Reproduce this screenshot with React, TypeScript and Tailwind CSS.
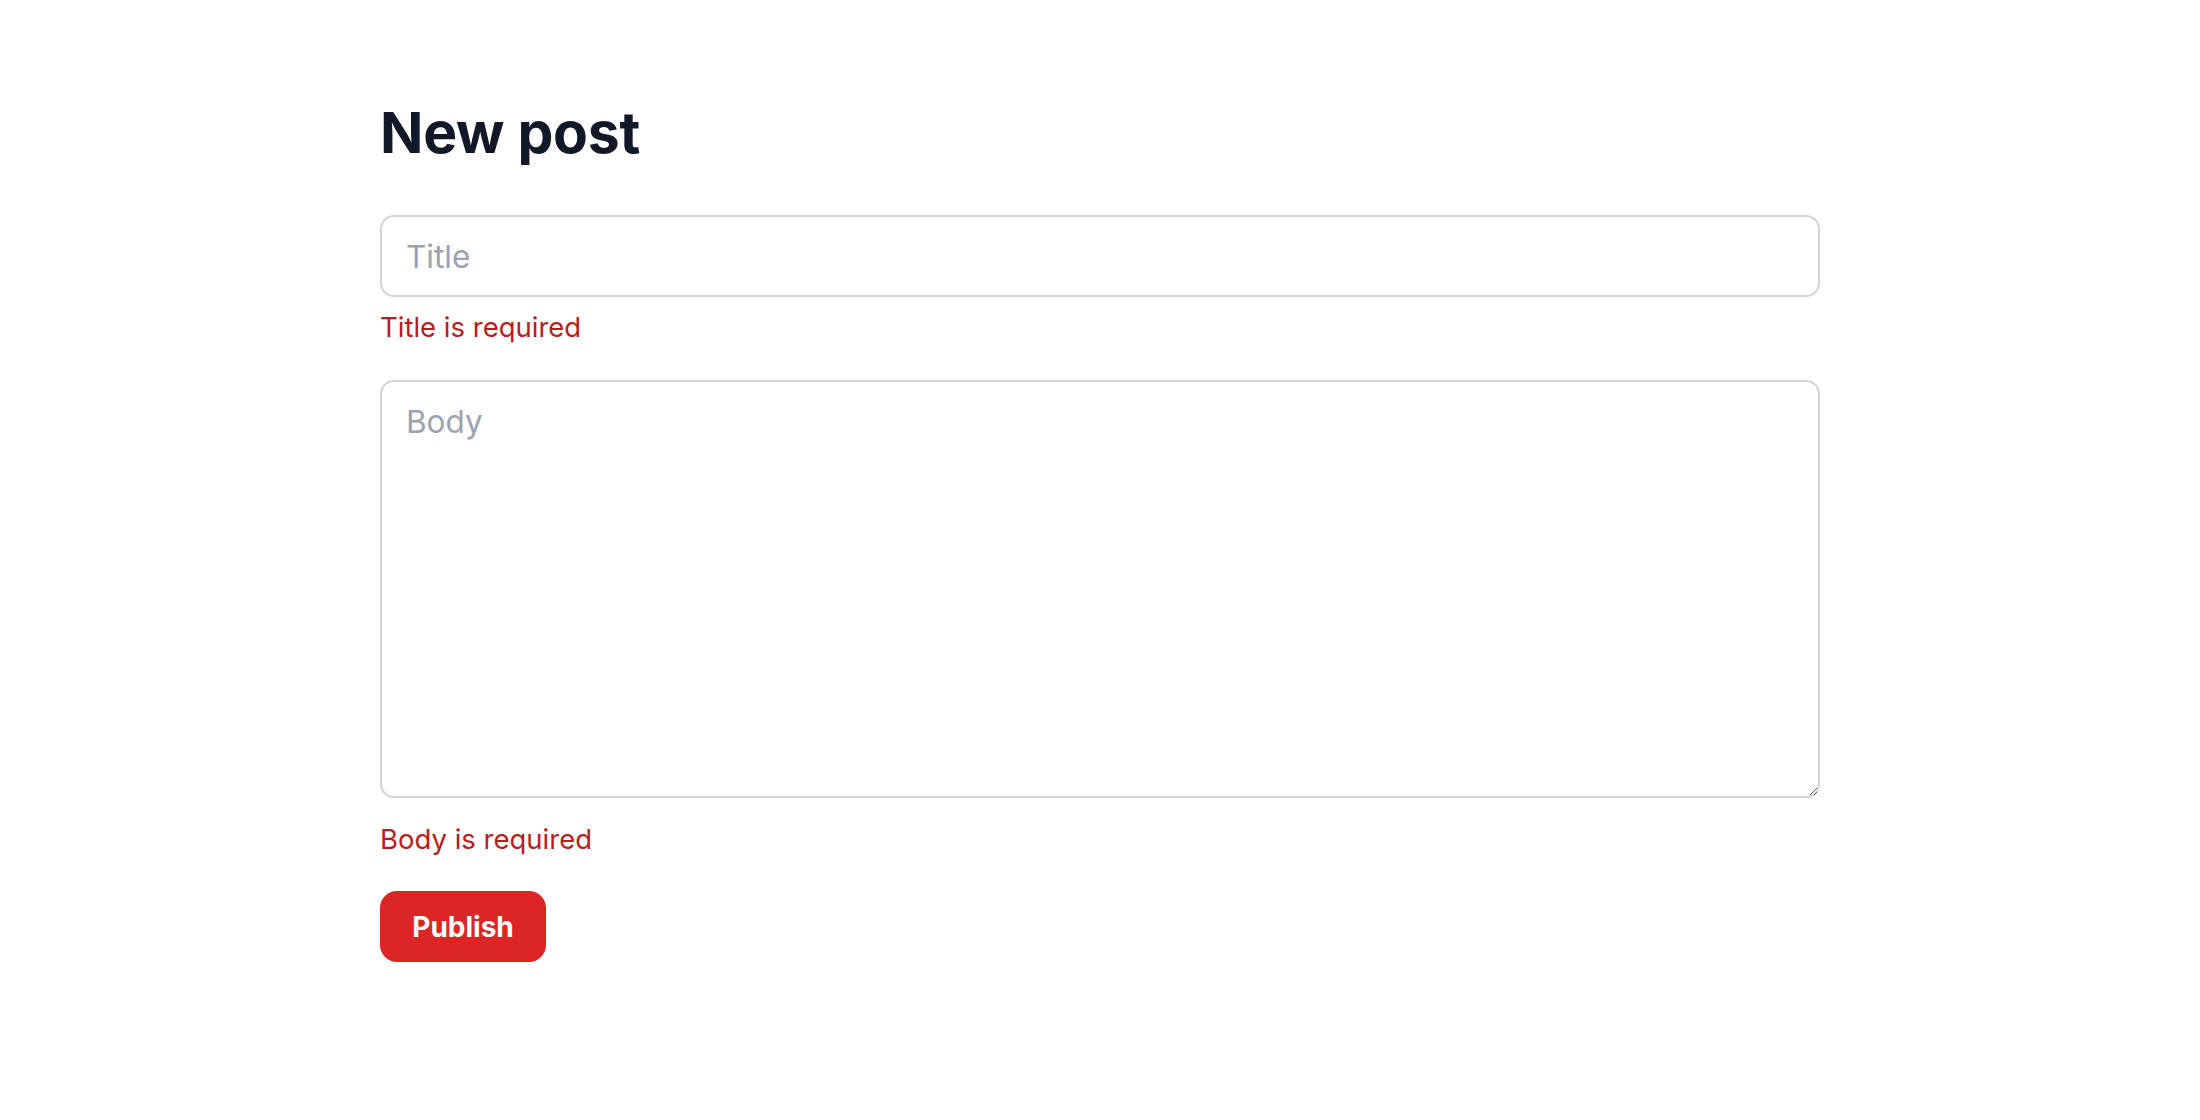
import { useState } from "react";

export default function App() {
  const [title, setTitle] = useState("");
  const [body, setBody] = useState("");

  return (
    <div className="min-h-screen bg-white font-['Inter',sans-serif]">
      <form
        className="mx-auto flex w-[1440px] flex-col items-start pt-[100px]"
        onSubmit={(e) => e.preventDefault()}
      >
        <h1 className="text-[57px] leading-[66px] font-bold tracking-[-0.005em] text-[#111827]">New post</h1>

        <input
          value={title}
          onChange={(e) => setTitle(e.target.value)}
          placeholder="Title"
          className="mt-[49px] block h-[82px] w-full rounded-[14px] border-2 border-[#d1d5db] px-[24px] text-[31.5px] text-[#111827] outline-none placeholder:text-[#9ca3af]"
        />
        <p className="mt-[9px] text-[27.5px] leading-[42px] text-[#b91c1c]">Title is required</p>

        <textarea
          value={body}
          onChange={(e) => setBody(e.target.value)}
          placeholder="Body"
          className="mt-[32px] block h-[418px] w-full rounded-[14px] border-2 border-[#d1d5db] px-[24px] py-[16px] text-[31.5px] leading-[47px] text-[#111827] outline-none placeholder:text-[#9ca3af]"
        />
        <p className="mt-[20px] text-[27.5px] leading-[42px] text-[#b91c1c]">Body is required</p>

        <button
          type="submit"
          className="mt-[31px] h-[71px] w-[166px] rounded-[17px] bg-[#dc2626] text-[28px] font-bold text-white"
        >
          Publish
        </button>
      </form>
    </div>
  );
}
